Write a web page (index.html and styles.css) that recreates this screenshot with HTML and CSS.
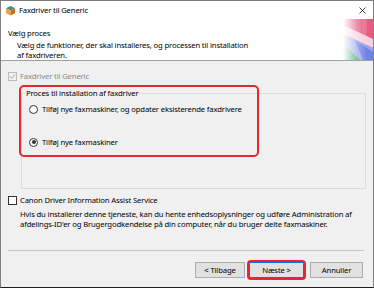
FILE: index.html
```html
<!DOCTYPE html>
<html lang="da">
<head>
    <meta charset="UTF-8">
    <title>Faxdriver til Generic</title>
    <link rel="stylesheet" href="styles.css">
</head>
<body>
<div class="window">
    <div class="titlebar">
        <svg class="app-icon" viewBox="0 0 12 12">
            <polygon points="6,1 11,3.5 6,6 1,3.5" fill="#3d9b56"/>
            <polygon points="6,2.2 8.6,3.5 6,4.8 3.4,3.5" fill="#4d7fd6"/>
            <polygon points="1,3.5 6,6 6,11.5 1,9" fill="#eba447"/>
            <polygon points="11,3.5 6,6 6,11.5 11,9" fill="#c4721f"/>
        </svg>
        <span class="title">Faxdriver til Generic</span>
        <svg class="close" viewBox="0 0 7 7">
            <path d="M0.5 0.5L6.5 6.5M6.5 0.5L0.5 6.5" stroke="#111" stroke-width="0.8"/>
        </svg>
    </div>
    <div class="header">
        <div class="header-text">
            <h1 class="heading">Vælg proces</h1>
            <p class="subheading">Vælg de funktioner, der skal installeres, og processen til installation<br>af faxdriveren.</p>
        </div>
        <svg class="header-art" viewBox="0 0 30 41">
            <defs>
                <linearGradient id="fade" x1="0" x2="1" y1="0" y2="0">
                    <stop offset="0" stop-color="#fff" stop-opacity="1"/>
                    <stop offset="0.45" stop-color="#fff" stop-opacity="0.35"/>
                    <stop offset="0.8" stop-color="#fff" stop-opacity="0"/>
                </linearGradient>
            </defs>
            <rect width="30" height="41" fill="#e45c80"/>
            <rect x="20" width="4" height="41" fill="#ea6e8e"/>
            <polygon points="0,6 30,20 30,29 0,15" fill="#f6d0e0"/>
            <polygon points="0,15 30,29 30,41 0,41" fill="#9aa4ec"/>
            <polygon points="12,21 30,33 30,41 20,41" fill="#6f82e4"/>
            <polygon points="0,25 17,41 0,41" fill="#3aa86a"/>
            <rect width="30" height="41" fill="url(#fade)"/>
        </svg>
    </div>
    <div class="content">
        <label class="check disabled">
            <span class="box">
                <svg viewBox="0 0 7 7"><polyline points="0.8,3.6 2.6,5.4 6.2,1.4" fill="none" stroke="#a8a8a8" stroke-width="1"/></svg>
            </span>Faxdriver til Generic
        </label>
        <fieldset class="group">
            <legend>Proces til installation af faxdriver</legend>
            <label class="radio"><span class="dot"></span>Tilføj nye faxmaskiner, og opdater eksisterende faxdrivere</label>
            <label class="radio selected"><span class="dot"></span>Tilføj nye faxmaskiner</label>
        </fieldset>
        <label class="check"><span class="box"></span>Canon Driver Information Assist Service</label>
        <p class="desc">Hvis du installerer denne tjeneste, kan du hente enhedsoplysninger og udføre Administration af<br>afdelings-ID'er og Brugergodkendelse på din computer, når du bruger delte faxmaskiner.</p>
        <div class="mark"></div>
    </div>
    <div class="footer">
        <div class="rule"></div>
        <div class="buttons">
            <button class="btn">&lt; Tilbage</button>
            <button class="btn default">Næste &gt;</button>
            <button class="btn cancel">Annuller</button>
        </div>
    </div>
</div>
</body>
</html>
```

FILE: styles.css
```css
*{
    margin: 0;
    padding: 0;
    box-sizing: border-box;
}
body{
    font-family: "Noto Sans", sans-serif;
    font-size: 7.7px;
    line-height: 10px;
    letter-spacing: -0.15px;
    color: #000;
    background: #fff;
}
.window{
    width: 374px;
    height: 288px;
    border: 1px solid #808080;
    border-bottom-color: #1e1e1e;
    background: #f0f0f0;
    display: flex;
    flex-direction: column;
}
.titlebar{
    height: 18px;
    background: #fff;
    display: flex;
    align-items: center;
    padding: 0 7px 0 4px;
}
.app-icon{
    width: 11px;
    height: 11px;
    margin-right: 3px;
}
.title{
    flex: 1;
}
.close{
    width: 7px;
    height: 7px;
}
.header{
    height: 42px;
    background: #fff;
    border-bottom: 1px solid #a0a0a0;
    display: flex;
    justify-content: space-between;
}
.header-text{
    padding: 9px 0 0 7px;
}
.heading{
    font-size: 7.7px;
    font-weight: normal;
}
.subheading{
    margin: 2px 0 0 9px;
}
.header-art{
    width: 30px;
    height: 41px;
}
.content{
    position: relative;
    padding: 10px 0 0 7px;
}
.check{
    display: flex;
    align-items: center;
    height: 10px;
}
.box{
    width: 9px;
    height: 9px;
    border: 1px solid #333;
    background: #fff;
    margin-right: 3px;
    display: flex;
    align-items: center;
    justify-content: center;
}
.box svg{
    width: 7px;
    height: 7px;
}
.check.disabled{
    color: #8a8a8a;
}
.check.disabled .box{
    border-color: #bcbcbc;
    background: #f0f0f0;
}
.group{
    width: 345px;
    margin: 7px 0 0 13px;
    border: 1px solid #dcdcdc;
    padding: 6px 0 41px 7px;
}
.group legend{
    margin-left: -4px;
    padding: 0 1px;
}
.radio{
    display: flex;
    align-items: center;
    height: 10px;
}
.radio + .radio{
    margin-top: 23px;
}
.dot{
    width: 9px;
    height: 9px;
    border: 1px solid #333;
    border-radius: 50%;
    background: #fff;
    margin-right: 4px;
    position: relative;
}
.radio.selected .dot::after{
    content: "";
    position: absolute;
    left: 1.5px;
    top: 1.5px;
    width: 4px;
    height: 4px;
    border-radius: 50%;
    background: #333;
}
.content > .check + .group + .check{
    margin-top: 6px;
}
.desc{
    margin: 4px 0 0 12px;
}
.mark{
    position: absolute;
    left: 18px;
    top: 24px;
    width: 240px;
    height: 72px;
    border: 2px solid #e8262e;
    border-radius: 5px;
}
.footer{
    margin-top: auto;
    padding: 0 9px 9px 7px;
}
.rule{
    height: 1px;
    background: #c8c8c8;
}
.buttons{
    display: flex;
    justify-content: flex-end;
    margin-top: 11px;
    padding-right: 1px;
}
.btn{
    font: inherit;
    letter-spacing: inherit;
    height: 16px;
    width: 50px;
    background: #e1e1e1;
    border: 1px solid #adadad;
    color: #000;
}
.btn.default{
    width: 55px;
    margin-left: 4px;
    border-color: #0078d7;
    position: relative;
}
.btn.default::after{
    content: "";
    position: absolute;
    inset: -3px;
    border: 2px solid #e8262e;
    border-radius: 4px;
}
.btn.cancel{
    width: 53px;
    margin-left: 6px;
}
```
